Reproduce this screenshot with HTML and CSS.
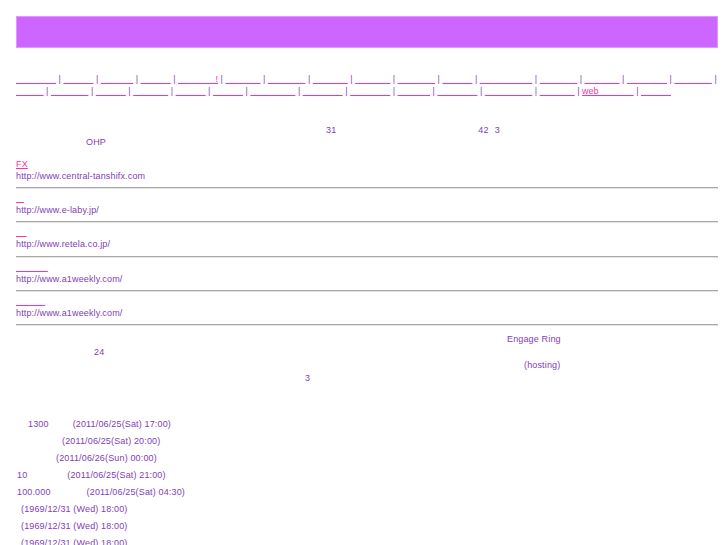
FILE: index.html
```html
<!DOCTYPE html>
<html lang="ja">
<head>
<meta charset="utf-8">
<title>Page</title>
<link rel="stylesheet" href="styles.css">
</head>
<body>
<div class="page">
  <div class="banner"></div>

  <div class="nav">
    <a href="#">&nbsp;&nbsp;&nbsp;&nbsp;&nbsp;&nbsp;&nbsp;&nbsp;&nbsp;&nbsp;&nbsp;&nbsp;&nbsp;&nbsp;&nbsp;&nbsp;</a>
    <span class="sep">|</span>
    <a href="#">&nbsp;&nbsp;&nbsp;&nbsp;&nbsp;&nbsp;&nbsp;&nbsp;&nbsp;&nbsp;&nbsp;&nbsp;</a>
    <span class="sep">|</span>
    <a href="#">&nbsp;&nbsp;&nbsp;&nbsp;&nbsp;&nbsp;&nbsp;&nbsp;&nbsp;&nbsp;&nbsp;&nbsp;&nbsp;</a>
    <span class="sep">|</span>
    <a href="#">&nbsp;&nbsp;&nbsp;&nbsp;&nbsp;&nbsp;&nbsp;&nbsp;&nbsp;&nbsp;&nbsp;&nbsp;</a>
    <span class="sep">|</span>
    <a href="#">&nbsp;&nbsp;&nbsp;&nbsp;&nbsp;&nbsp;&nbsp;&nbsp;&nbsp;&nbsp;&nbsp;&nbsp;&nbsp;&nbsp;&nbsp;!</a>
    <span class="sep">|</span>
    <a href="#">&nbsp;&nbsp;&nbsp;&nbsp;&nbsp;&nbsp;&nbsp;&nbsp;&nbsp;&nbsp;&nbsp;&nbsp;&nbsp;&nbsp;</a>
    <span class="sep">|</span>
    <a href="#">&nbsp;&nbsp;&nbsp;&nbsp;&nbsp;&nbsp;&nbsp;&nbsp;&nbsp;&nbsp;&nbsp;&nbsp;&nbsp;&nbsp;&nbsp;</a>
    <span class="sep">|</span>
    <a href="#">&nbsp;&nbsp;&nbsp;&nbsp;&nbsp;&nbsp;&nbsp;&nbsp;&nbsp;&nbsp;&nbsp;&nbsp;&nbsp;&nbsp;</a>
    <span class="sep">|</span>
    <a href="#">&nbsp;&nbsp;&nbsp;&nbsp;&nbsp;&nbsp;&nbsp;&nbsp;&nbsp;&nbsp;&nbsp;&nbsp;&nbsp;&nbsp;</a>
    <span class="sep">|</span>
    <a href="#">&nbsp;&nbsp;&nbsp;&nbsp;&nbsp;&nbsp;&nbsp;&nbsp;&nbsp;&nbsp;&nbsp;&nbsp;&nbsp;&nbsp;&nbsp;</a>
    <span class="sep">|</span>
    <a href="#">&nbsp;&nbsp;&nbsp;&nbsp;&nbsp;&nbsp;&nbsp;&nbsp;&nbsp;&nbsp;&nbsp;&nbsp;</a>
    <span class="sep">|</span>
    <a href="#">&nbsp;&nbsp;&nbsp;&nbsp;&nbsp;&nbsp;&nbsp;&nbsp;&nbsp;&nbsp;&nbsp;&nbsp;&nbsp;&nbsp;&nbsp;&nbsp;&nbsp;&nbsp;&nbsp;&nbsp;&nbsp;</a>
    <span class="sep">|</span>
    <a href="#">&nbsp;&nbsp;&nbsp;&nbsp;&nbsp;&nbsp;&nbsp;&nbsp;&nbsp;&nbsp;&nbsp;&nbsp;&nbsp;&nbsp;&nbsp;</a>
    <span class="sep">|</span>
    <a href="#">&nbsp;&nbsp;&nbsp;&nbsp;&nbsp;&nbsp;&nbsp;&nbsp;&nbsp;&nbsp;&nbsp;&nbsp;&nbsp;&nbsp;</a>
    <span class="sep">|</span>
    <a href="#">&nbsp;&nbsp;&nbsp;&nbsp;&nbsp;&nbsp;&nbsp;&nbsp;&nbsp;&nbsp;&nbsp;&nbsp;&nbsp;&nbsp;&nbsp;&nbsp;</a>
    <span class="sep">|</span>
    <a href="#">&nbsp;&nbsp;&nbsp;&nbsp;&nbsp;&nbsp;&nbsp;&nbsp;&nbsp;&nbsp;&nbsp;&nbsp;&nbsp;&nbsp;&nbsp;</a>
    <span class="sep">|</span><br>
    <a href="#">&nbsp;&nbsp;&nbsp;&nbsp;&nbsp;&nbsp;&nbsp;&nbsp;&nbsp;&nbsp;&nbsp;</a>
    <span class="sep">|</span>
    <a href="#">&nbsp;&nbsp;&nbsp;&nbsp;&nbsp;&nbsp;&nbsp;&nbsp;&nbsp;&nbsp;&nbsp;&nbsp;&nbsp;&nbsp;&nbsp;</a>
    <span class="sep">|</span>
    <a href="#">&nbsp;&nbsp;&nbsp;&nbsp;&nbsp;&nbsp;&nbsp;&nbsp;&nbsp;&nbsp;&nbsp;&nbsp;</a>
    <span class="sep">|</span>
    <a href="#">&nbsp;&nbsp;&nbsp;&nbsp;&nbsp;&nbsp;&nbsp;&nbsp;&nbsp;&nbsp;&nbsp;&nbsp;&nbsp;&nbsp;</a>
    <span class="sep">|</span>
    <a href="#">&nbsp;&nbsp;&nbsp;&nbsp;&nbsp;&nbsp;&nbsp;&nbsp;&nbsp;&nbsp;&nbsp;&nbsp;</a>
    <span class="sep">|</span>
    <a href="#">&nbsp;&nbsp;&nbsp;&nbsp;&nbsp;&nbsp;&nbsp;&nbsp;&nbsp;&nbsp;&nbsp;&nbsp;</a>
    <span class="sep">|</span>
    <a href="#">&nbsp;&nbsp;&nbsp;&nbsp;&nbsp;&nbsp;&nbsp;&nbsp;&nbsp;&nbsp;&nbsp;&nbsp;&nbsp;&nbsp;&nbsp;&nbsp;&nbsp;&nbsp;</a>
    <span class="sep">|</span>
    <a href="#">&nbsp;&nbsp;&nbsp;&nbsp;&nbsp;&nbsp;&nbsp;&nbsp;&nbsp;&nbsp;&nbsp;&nbsp;&nbsp;&nbsp;&nbsp;&nbsp;</a>
    <span class="sep">|</span>
    <a href="#">&nbsp;&nbsp;&nbsp;&nbsp;&nbsp;&nbsp;&nbsp;&nbsp;&nbsp;&nbsp;&nbsp;&nbsp;&nbsp;&nbsp;&nbsp;&nbsp;</a>
    <span class="sep">|</span>
    <a href="#">&nbsp;&nbsp;&nbsp;&nbsp;&nbsp;&nbsp;&nbsp;&nbsp;&nbsp;&nbsp;&nbsp;&nbsp;&nbsp;</a>
    <span class="sep">|</span>
    <a href="#">&nbsp;&nbsp;&nbsp;&nbsp;&nbsp;&nbsp;&nbsp;&nbsp;&nbsp;&nbsp;&nbsp;&nbsp;&nbsp;&nbsp;&nbsp;&nbsp;</a>
    <span class="sep">|</span>
    <a href="#">&nbsp;&nbsp;&nbsp;&nbsp;&nbsp;&nbsp;&nbsp;&nbsp;&nbsp;&nbsp;&nbsp;&nbsp;&nbsp;&nbsp;&nbsp;&nbsp;&nbsp;&nbsp;&nbsp;</a>
    <span class="sep">|</span>
    <a href="#">&nbsp;&nbsp;&nbsp;&nbsp;&nbsp;&nbsp;&nbsp;&nbsp;&nbsp;&nbsp;&nbsp;&nbsp;&nbsp;&nbsp;</a>
    <span class="sep">|</span>
    <a href="#">web&nbsp;&nbsp;&nbsp;&nbsp;&nbsp;&nbsp;&nbsp;&nbsp;&nbsp;&nbsp;&nbsp;&nbsp;&nbsp;&nbsp;</a>
    <span class="sep">|</span>
    <a href="#">&nbsp;&nbsp;&nbsp;&nbsp;&nbsp;&nbsp;&nbsp;&nbsp;&nbsp;&nbsp;&nbsp;&nbsp;</a>
  </div>

  <div class="intro">
    <div class="ln"><span class="g310">31</span><span class="g142">42</span><span class="g6">3</span></div>
    <div class="ln"><span class="g70">OHP</span></div>
  </div>

  <div class="sites">
    <div class="site">
      <div class="ln"><a href="#">FX</a></div>
      <div class="ln">http://www.central-tanshifx.com</div>
    </div>
    <hr>
    <div class="site">
      <div class="ln"><a href="#">&nbsp;&nbsp;&nbsp;</a></div>
      <div class="ln">http://www.e-laby.jp/</div>
    </div>
    <hr>
    <div class="site">
      <div class="ln"><a href="#">&nbsp;&nbsp;&nbsp;&nbsp;</a></div>
      <div class="ln">http://www.retela.co.jp/</div>
    </div>
    <hr>
    <div class="site">
      <div class="ln"><a href="#">&nbsp;&nbsp;&nbsp;&nbsp;&nbsp;&nbsp;&nbsp;&nbsp;&nbsp;&nbsp;&nbsp;&nbsp;</a></div>
      <div class="ln">http://www.a1weekly.com/</div>
    </div>
    <hr>
    <div class="site">
      <div class="ln"><a href="#">&nbsp;&nbsp;&nbsp;&nbsp;&nbsp;&nbsp;&nbsp;&nbsp;&nbsp;&nbsp;&nbsp;</a></div>
      <div class="ln">http://www.a1weekly.com/</div>
    </div>
    <hr>
  </div>

  <div class="about">
    <div class="ln"><span class="g491">Engage Ring</span></div>
    <div class="ln"><span class="g78">24</span></div>
    <div class="ln"><span class="g508">(hosting)</span></div>
    <div class="ln"><span class="g289">3</span></div>
  </div>

  <div class="news">
    <div class="row"><span class="g12">1300</span><span class="g24">(2011/06/25(Sat) 17:00)</span></div>
    <div class="row"><span class="g46">(2011/06/25(Sat) 20:00)</span></div>
    <div class="row"><span class="g40">(2011/06/26(Sun) 00:00)</span></div>
    <div class="row"><span class="g1">10</span><span class="g40">(2011/06/25(Sat) 21:00)</span></div>
    <div class="row"><span class="g1">100.000</span><span class="g36">(2011/06/25(Sat) 04:30)</span></div>
    <div class="row"><span class="g5">(1969/12/31 (Wed) 18:00)</span></div>
    <div class="row"><span class="g5">(1969/12/31 (Wed) 18:00)</span></div>
    <div class="row"><span class="g5">(1969/12/31 (Wed) 18:00)</span></div>
  </div>
</div>
</body>
</html>
```

FILE: styles.css
```css
body {
  margin: 0;
  background: #ffffff;
  color: #8040b8;
  font-family: "Liberation Sans", Arial, sans-serif;
  font-size: 9px;
  letter-spacing: 0.15px;
}

.page {
  padding: 16px 9px 0 16px;
}

.banner {
  height: 30px;
  background: #cc66ff;
  border: 1px solid #dd99ff;
}

a {
  color: #ff3399;
  text-decoration: underline;
}

.nav {
  margin-top: 26px;
  line-height: 11.5px;
  letter-spacing: 0;
}

.nav .sep {
  color: #8f45c4;
}

.intro {
  margin-top: 27px;
  line-height: 12px;
}

.sites {
  margin-top: 10px;
}

.site .ln {
  line-height: 12.1px;
}

.sites hr {
  margin: 5px 0 3px;
  height: 0;
  border-style: solid;
  border-width: 1px 0;
  border-top-color: #a8a8a8;
  border-bottom-color: #e4e4e4;
}

.about {
  margin-top: 7px;
  line-height: 13px;
}

.news {
  margin-top: 31px;
}

.news .row {
  line-height: 17px;
  white-space: nowrap;
}

.g1 { margin-left: 1px; }
.g5 { margin-left: 5px; }
.g6 { margin-left: 6px; }
.g12 { margin-left: 12px; }
.g24 { margin-left: 24px; }
.g36 { margin-left: 36px; }
.g40 { margin-left: 40px; }
.g46 { margin-left: 46px; }
.g70 { margin-left: 70px; }
.g78 { margin-left: 78px; }
.g142 { margin-left: 142px; }
.g289 { margin-left: 289px; }
.g310 { margin-left: 310px; }
.g491 { margin-left: 491px; }
.g508 { margin-left: 508px; }
```
